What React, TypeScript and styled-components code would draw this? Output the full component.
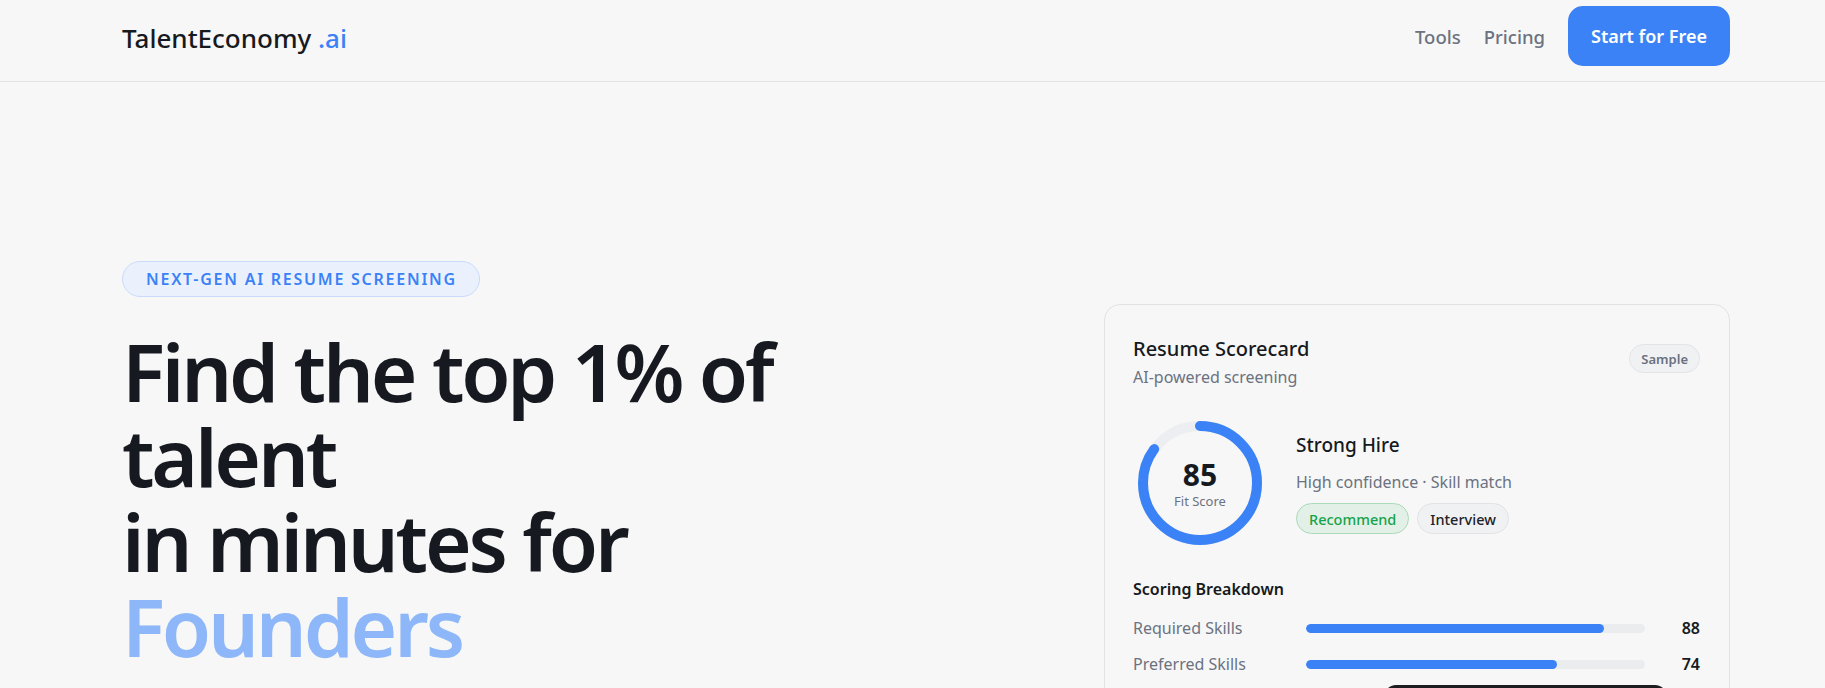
import styled, { createGlobalStyle } from "styled-components";

const GlobalStyle = createGlobalStyle`
  html, body {
    margin: 0;
    padding: 0;
    overflow: hidden;
    background: #f7f7f7;
  }
  body {
    font-family: "Noto Sans", "Open Sans", sans-serif;
    color: #161a20;
  }
  * {
    box-sizing: border-box;
  }
`;

const SCORE = 85;
const RING_SIZE = 134;
const RING_R = 57;
const CIRC = 2 * Math.PI * RING_R;

const BREAKDOWN = [
  { label: "Required Skills", value: 88 },
  { label: "Preferred Skills", value: 74 },
];

const HEADLINE = ["Find the top 1% of", "talent", "in minutes for"];

const App = () => {
  return (
    <Page>
      <GlobalStyle />
      <Header>
        <HeaderInner>
          <Logo>
            TalentEconomy <LogoAccent>.ai</LogoAccent>
          </Logo>
          <Nav>
            <NavLink>Tools</NavLink>
            <NavLink>Pricing</NavLink>
            <CtaButton>Start for Free</CtaButton>
          </Nav>
        </HeaderInner>
      </Header>

      <Hero>
        <HeroCopy>
          <Badge>NEXT-GEN AI RESUME SCREENING</Badge>
          <Headline>
            {HEADLINE.map((line) => (
              <HeadLine key={line}>{line}</HeadLine>
            ))}
            <HeadLine $accent>Founders</HeadLine>
          </Headline>
        </HeroCopy>

        <Card>
          <CardHead>
            <div>
              <CardTitle>Resume Scorecard</CardTitle>
              <CardSub>AI-powered screening</CardSub>
            </div>
            <SamplePill>Sample</SamplePill>
          </CardHead>

          <ScoreRow>
            <RingWrap>
              <svg width={RING_SIZE} height={RING_SIZE} viewBox={`0 0 ${RING_SIZE} ${RING_SIZE}`}>
                <circle
                  cx={RING_SIZE / 2}
                  cy={RING_SIZE / 2}
                  r={RING_R}
                  fill="none"
                  stroke="#eceef1"
                  strokeWidth={10}
                />
                <circle
                  cx={RING_SIZE / 2}
                  cy={RING_SIZE / 2}
                  r={RING_R}
                  fill="none"
                  stroke="#3b82f6"
                  strokeWidth={10}
                  strokeLinecap="round"
                  strokeDasharray={CIRC}
                  strokeDashoffset={CIRC * (1 - SCORE / 100)}
                  transform={`rotate(-90 ${RING_SIZE / 2} ${RING_SIZE / 2})`}
                />
              </svg>
              <RingLabel>
                <ScoreNum>{SCORE}</ScoreNum>
                <ScoreCaption>Fit Score</ScoreCaption>
              </RingLabel>
            </RingWrap>
            <Verdict>
              <VerdictTitle>Strong Hire</VerdictTitle>
              <VerdictSub>High confidence · Skill match</VerdictSub>
              <Tags>
                <Tag $tone="green">Recommend</Tag>
                <Tag $tone="gray">Interview</Tag>
              </Tags>
            </Verdict>
          </ScoreRow>

          <SectionTitle>Scoring Breakdown</SectionTitle>
          <Rows>
            {BREAKDOWN.map((row) => (
              <Row key={row.label}>
                <RowLabel>{row.label}</RowLabel>
                <Track>
                  <Fill style={{ width: `${row.value}%` }} />
                </Track>
                <RowValue>{row.value}</RowValue>
              </Row>
            ))}
          </Rows>

          <FloatingBar />
        </Card>
      </Hero>
    </Page>
  );
};

const Page = styled.div`
  min-height: 688px;
  background: #f7f7f7;
`;

const Header = styled.header`
  border-bottom: 1px solid #e4e4e4;
  padding: 6px 0 15px;
`;

const HeaderInner = styled.div`
  margin-left: 122px;
  width: 1608px;
  display: flex;
  align-items: center;
  justify-content: space-between;
`;

const Logo = styled.div`
  font-size: 26px;
  font-weight: 500;
  color: #161a20;
  padding-top: 3px;
`;

const LogoAccent = styled.span`
  color: #3b82f6;
`;

const Nav = styled.nav`
  display: flex;
  align-items: center;
  gap: 23px;
`;

const NavLink = styled.a`
  font-size: 18.5px;
  font-weight: 500;
  color: #6b7280;
  cursor: pointer;
`;

const CtaButton = styled.button`
  height: 60px;
  padding: 0 23px;
  border: none;
  border-radius: 15px;
  background: #3b82f6;
  color: #ffffff;
  font-family: inherit;
  font-size: 18px;
  font-weight: 600;
  cursor: pointer;
`;

const Hero = styled.section`
  margin-left: 122px;
  width: 1608px;
  display: grid;
  grid-template-columns: 1fr 626px;
  align-items: start;
  padding-top: 179px;
`;

const HeroCopy = styled.div`
  display: flex;
  flex-direction: column;
  align-items: flex-start;
`;

const Badge = styled.div`
  height: 36px;
  display: flex;
  align-items: center;
  padding: 0 22px 0 23px;
  border-radius: 999px;
  border: 1px solid #c9dbfb;
  background: #eaf1fd;
  color: #3b82f6;
  font-size: 16px;
  font-weight: 600;
  letter-spacing: 0.11em;
`;

const Headline = styled.h1`
  margin: 31px 0 0;
  font-size: 80px;
  font-weight: 600;
  letter-spacing: -0.04em;
  color: #161a20;
`;

const HeadLine = styled.span<{ $accent?: boolean }>`
  display: block;
  height: 85px;
  line-height: 85px;
  color: ${({ $accent }) => ($accent ? "#8db7f8" : "#161a20")};
`;

const Card = styled.div`
  position: relative;
  margin-top: 43px;
  width: 626px;
  height: 420px;
  border: 1px solid #e3e3e5;
  border-radius: 16px;
  background: #f7f7f7;
  padding: 30px 29px 28px 28px;
`;

const CardHead = styled.div`
  display: flex;
  justify-content: space-between;
  align-items: flex-start;
`;

const CardTitle = styled.div`
  font-size: 20px;
  line-height: 28px;
  font-weight: 500;
  color: #161a20;
`;

const CardSub = styled.div`
  margin-top: 2px;
  font-size: 16px;
  line-height: 24px;
  color: #6b7280;
`;

const SamplePill = styled.span`
  margin-top: 9px;
  height: 29px;
  padding: 0 11px;
  display: flex;
  align-items: center;
  border-radius: 999px;
  border: 1px solid #e2e4e8;
  background: #f0f1f3;
  color: #6b7280;
  font-size: 13px;
  font-weight: 600;
`;

const ScoreRow = styled.div`
  margin-top: 27px;
  display: flex;
  align-items: center;
  gap: 29px;
`;

const RingWrap = styled.div`
  position: relative;
  width: ${RING_SIZE}px;
  height: ${RING_SIZE}px;
  flex-shrink: 0;

  svg {
    display: block;
  }
`;

const RingLabel = styled.div`
  position: absolute;
  inset: 0;
  display: flex;
  flex-direction: column;
  align-items: center;
  justify-content: center;
`;

const ScoreNum = styled.div`
  font-size: 30px;
  line-height: 36px;
  font-weight: 700;
  color: #161a20;
`;

const ScoreCaption = styled.div`
  font-size: 13px;
  line-height: 16px;
  color: #6b7280;
`;

const Verdict = styled.div`
  display: flex;
  flex-direction: column;
`;

const VerdictTitle = styled.div`
  font-size: 19px;
  line-height: 26px;
  font-weight: 500;
  color: #161a20;
`;

const VerdictSub = styled.div`
  margin-top: 12px;
  font-size: 16px;
  line-height: 24px;
  color: #6b7280;
`;

const Tags = styled.div`
  margin-top: 9px;
  display: flex;
  gap: 8px;
`;

const Tag = styled.span<{ $tone: "green" | "gray" }>`
  height: 31px;
  padding: 0 12px;
  display: flex;
  align-items: center;
  border-radius: 999px;
  font-size: 14.5px;
  font-weight: 500;
  border: 1px solid ${({ $tone }) => ($tone === "green" ? "#a9dab9" : "#e1e3e7")};
  background: ${({ $tone }) => ($tone === "green" ? "#e3f0e7" : "#f0f1f3")};
  color: ${({ $tone }) => ($tone === "green" ? "#16a34a" : "#1f2328")};
`;

const SectionTitle = styled.div`
  margin-top: 27px;
  font-size: 16px;
  line-height: 24px;
  font-weight: 600;
  color: #161a20;
`;

const Rows = styled.div`
  margin-top: 15px;
  display: flex;
  flex-direction: column;
  gap: 12px;
`;

const Row = styled.div`
  display: grid;
  grid-template-columns: 173px 1fr 55px;
  align-items: center;
  height: 24px;
`;

const RowLabel = styled.span`
  font-size: 16px;
  color: #6b7280;
`;

const Track = styled.div`
  height: 9px;
  border-radius: 999px;
  background: #ebecee;
  overflow: hidden;
`;

const Fill = styled.div`
  height: 100%;
  border-radius: 999px;
  background: #3b82f6;
`;

const RowValue = styled.span`
  text-align: right;
  font-size: 16px;
  font-weight: 600;
  color: #161a20;
`;

const FloatingBar = styled.div`
  position: absolute;
  left: 279px;
  top: 380px;
  width: 283px;
  height: 44px;
  border-radius: 12px;
  background: #1d1d1f;
`;

export default App;
